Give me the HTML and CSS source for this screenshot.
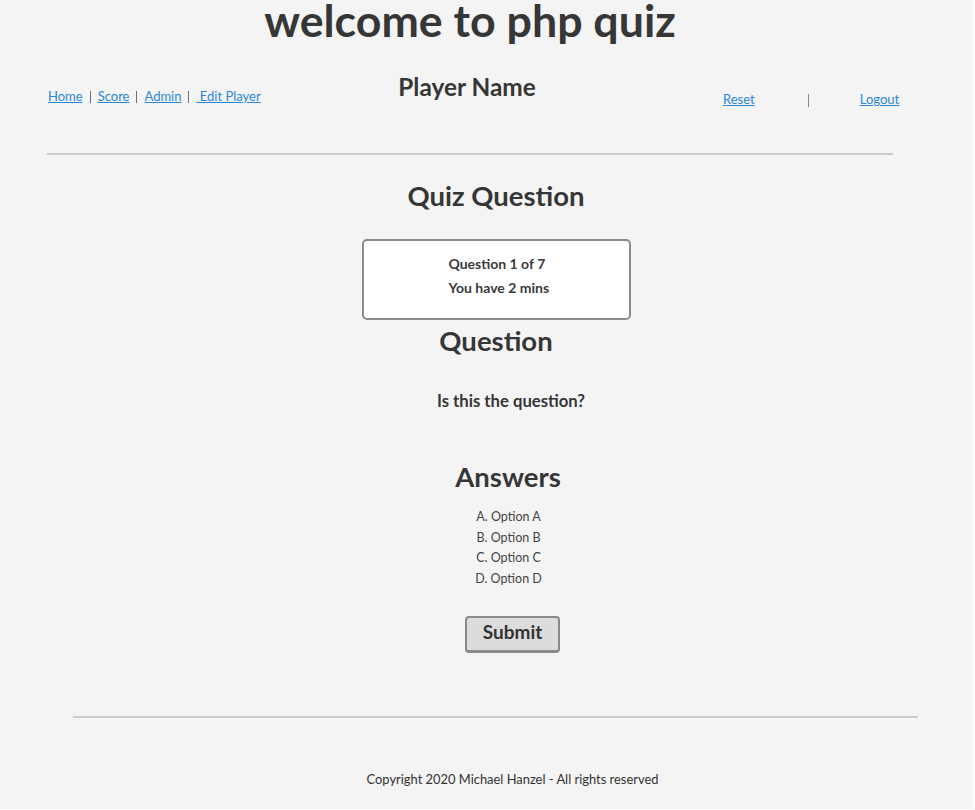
FILE: index.html
```html
<!DOCTYPE html>
<html lang="en">
<head>
<meta charset="utf-8">
<title>php quiz</title>
<link rel="stylesheet" href="styles.css">
</head>
<body>
<header class="site-header">
  <h1 class="title">welcome to php quiz</h1>
  <div class="topbar">
    <nav class="nav">
      <a href="#">Home</a><span class="sep"></span><a href="#">Score</a><span class="sep"></span><a href="#">Admin</a><span class="sep"></span><a href="#">&nbsp;Edit Player</a>
    </nav>
    <div class="player">Player Name</div>
    <div class="actions">
      <a href="#">Reset</a><span class="vsep"></span><a href="#" class="logout">Logout</a>
    </div>
  </div>
  <hr class="rule">
</header>

<main class="quiz">
  <h2 class="heading">Quiz Question</h2>
  <div class="info-box">
    <p>Question 1 of 7</p>
    <p>You have 2 mins</p>
  </div>
  <h2 class="heading heading-tight">Question</h2>
  <p class="question-text">Is this the question?</p>
  <h2 class="heading answers-heading">Answers</h2>
  <ul class="options">
    <li>A. Option A</li>
    <li>B. Option B</li>
    <li>C. Option C</li>
    <li>D. Option D</li>
  </ul>
  <div class="submit-row">
    <button class="submit" type="button">Submit</button>
  </div>
</main>

<footer class="site-footer">
  <hr class="rule rule-footer">
  <p class="copyright">Copyright 2020 Michael Hanzel - All rights reserved</p>
</footer>
</body>
</html>
```
FILE: styles.css
```css
html {
  background: #ffffff;
}

body {
  margin: 0 2px 0 0;
  min-height: 809px;
  background: #f4f4f4;
  color: #333333;
  font-family: "Lato", "Open Sans", sans-serif;
}

a {
  color: #2a87d8;
  text-decoration: underline;
}

/* Header */
.site-header {
  margin-left: 47px;
  width: 846px;
}

.title {
  margin: 0;
  font-size: 44.7px;
  line-height: 40px;
  font-weight: 700;
  text-align: center;
  color: #363636;
}

.topbar {
  display: grid;
  grid-template-columns: 351px 138px 1fr;
  align-items: start;
  margin-top: 31px;
}

.nav {
  display: flex;
  align-items: flex-start;
  margin-top: 17px;
  padding-left: 1px;
  font-size: 13px;
  line-height: 16px;
  white-space: nowrap;
}

.sep {
  display: inline-block;
  width: 0;
  height: 12px;
  margin: 3px 7px 0 7px;
  border-left: 1.5px solid #6f6f6f;
}

.player {
  margin-top: 1px;
  font-size: 24.4px;
  line-height: 29px;
  font-weight: 700;
  text-align: center;
  white-space: nowrap;
  color: #363636;
}

.actions {
  display: flex;
  align-items: flex-start;
  margin-top: 20px;
  padding-left: 187px;
  font-size: 13px;
  line-height: 16px;
}

.vsep {
  display: inline-block;
  width: 0;
  height: 13px;
  margin: 3px 0 0 53px;
  border-left: 1px solid #888888;
}

.logout {
  margin-left: 51px;
}

.rule {
  margin: 46px 0 0 0;
  height: 0;
  border: 0;
  border-top: 2px solid #cccccc;
}

/* Main quiz area */
.quiz {
  margin-left: 47px;
  width: 898px;
  text-align: center;
}

.heading {
  margin: 25px 0 0 0;
  font-size: 27.5px;
  line-height: 32px;
  font-weight: 700;
  color: #363636;
}

.info-box {
  box-sizing: border-box;
  width: 269px;
  height: 81px;
  margin: 27px auto 0 auto;
  padding: 11px 0 0 85px;
  background: #ffffff;
  border: 2px solid #8a8a8a;
  border-radius: 5px;
  text-align: left;
  font-size: 14px;
  line-height: 24px;
  font-weight: 700;
  color: #3a3a3a;
}

.info-box p {
  margin: 0;
}

.heading-tight {
  margin-top: 5px;
}

.question-text {
  margin: 34px 0 0 0;
  padding-left: 30px;
  font-size: 16.7px;
  line-height: 20px;
  font-weight: 700;
  color: #363636;
}

.answers-heading {
  margin-top: 50px;
  padding-left: 24px;
}

.options {
  margin: 14px 0 0 0;
  padding: 0 0 0 25px;
  list-style: none;
  font-size: 12.5px;
  line-height: 20.7px;
  color: #444444;
}

.submit-row {
  margin-top: 26px;
  padding-left: 33px;
}

.submit {
  box-sizing: border-box;
  height: 37px;
  padding: 3px 16px 6px 16px;
  background: #dcdcdc;
  border: 2px solid #8a8a8a;
  border-bottom-width: 3px;
  border-radius: 4px;
  font-family: "Lato", "Open Sans", sans-serif;
  font-size: 19px;
  line-height: 22px;
  font-weight: 700;
  color: #333333;
}

/* Footer */
.site-footer {
  margin-left: 73px;
  width: 845px;
}

.rule-footer {
  margin-top: 63px;
}

.copyright {
  margin: 53px 0 0 0;
  padding-left: 34px;
  font-size: 12.9px;
  line-height: 16px;
  text-align: center;
  color: #333333;
}
```
